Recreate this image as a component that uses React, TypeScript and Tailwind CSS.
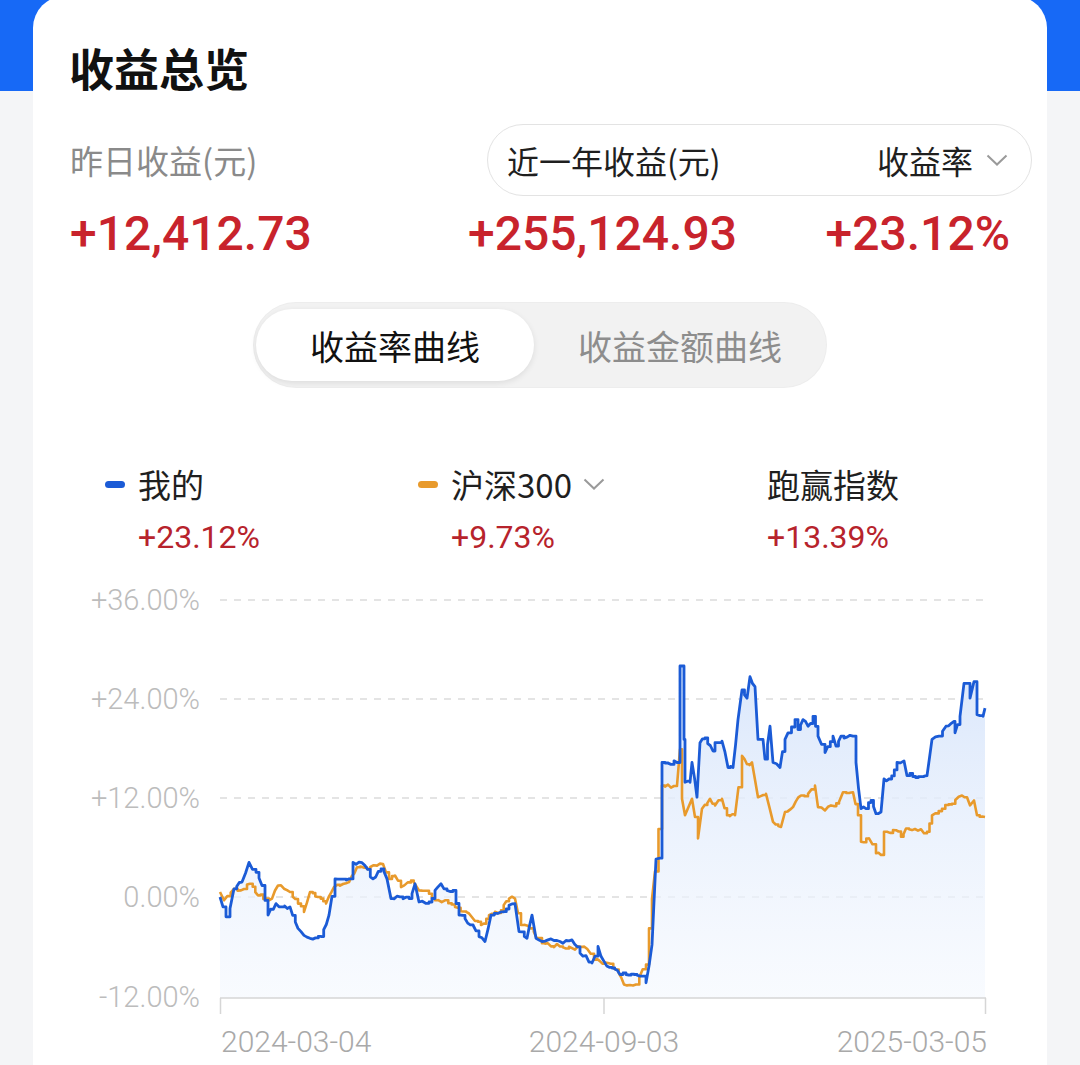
import React from 'react';

const CJK = "font-['Noto_Sans_CJK_SC','Noto_Sans',sans-serif]";
const NUM = "font-['Roboto','Noto_Sans',sans-serif]";

// keypoints: [x in page px, value in %]
const BLUE: [number, number][] = [
  [220, 0], [226, -2.4], [230, -1.4], [234, 1.0], [242, 1.8], [249, 4.2], [256, 3.0], [262, 1.4],
  [268, -2.2], [276, -0.8], [282, -1.2], [290, -1.2], [298, -3.8], [310, -5.0], [321, -4.8],
  [329, -2.2], [335, 2.2], [349, 2.2], [353, 4.2], [365, 3.8], [373, 2.2], [381, 3.4], [387, 2.2],
  [391, -0.2], [409, -0.2], [415, 1.6], [419, -0.6], [429, -0.6], [435, 0.8], [441, 1.6], [447, 0.8],
  [453, 0.8], [459, -2.2], [465, -2.6], [473, -3.4], [479, -4.8], [485, -5.4], [491, -2.2],
  [501, -1.8], [509, -1.0], [515, -0.8], [519, -4.2], [527, -5.0], [532, -2.2], [536, -5.0],
  [542, -5.4], [548, -5.2], [560, -5.4], [572, -5.2], [580, -6.8], [592, -8.0], [598, -6.0],
  [604, -7.8], [612, -8.6], [620, -9.4], [626, -9.4], [634, -9.4], [643, -9.6], [646, -10.4],
  [652, -5.8], [656, 4.6], [660, 4.7], [662, 16.3], [677, 16.3], [680, 28.0], [684, 19.1],
  [685, 13.9], [690, 13.9], [692, 16.3], [697, 12.1], [700, 18.7], [705, 19.3], [713, 17.7],
  [715, 18.7], [722, 18.9], [728, 15.7], [733, 15.7], [738, 21.5], [742, 25.1], [747, 24.1],
  [750, 26.7], [755, 25.5], [758, 19.1], [763, 19.1], [765, 16.7], [770, 20.7], [773, 16.3],
  [780, 15.7], [785, 19.1], [788, 19.9], [795, 21.5], [798, 20.3], [803, 21.5], [808, 20.7],
  [813, 21.9], [818, 19.5], [825, 17.5], [833, 19.5], [836, 18.3], [841, 19.5], [853, 19.5],
  [856, 16.3], [861, 10.7], [866, 10.7], [871, 11.7], [876, 10.1], [881, 10.3], [884, 14.3],
  [889, 14.3], [897, 16.3], [904, 16.5], [907, 14.7], [927, 14.7], [932, 19.1], [939, 19.5],
  [946, 20.7], [954, 21.3], [955, 19.9], [960, 21.9], [964, 25.9], [967, 25.9], [970, 24.1],
  [974, 26.1], [977, 22.1], [983, 21.9], [985, 22.9],
];

const ORANGE: [number, number][] = [
  [220, 0.6], [224, -0.4], [234, 1.0], [241, 0.8], [250, 1.6], [258, 0.2], [266, -0.2], [272, -0.2],
  [278, 1.4], [290, 0.6], [298, -0.8], [304, -1.8], [310, 0.6], [318, 0], [326, -0.8], [334, 1.2],
  [349, 1.8], [357, 3.6], [367, 3.4], [377, 3.8], [383, 4.0], [389, 2.2], [395, 2.6], [401, 1.2],
  [411, 2.0], [419, 0.8], [429, 0.4], [435, -0.4], [445, -0.4], [455, -1.2], [469, -2.0],
  [481, -3.4], [489, -2.2], [501, -1.6], [509, -0.2], [515, -0.2], [521, -3.4], [531, -3.8],
  [542, -5.6], [560, -6.0], [572, -6.2], [584, -6.0], [594, -7.6], [608, -8.0], [616, -8.8],
  [624, -10.6], [636, -10.6], [646, -8.2], [649, -3.8], [655, 3.1], [662, 13.5], [677, 13.5],
  [680, 17.9], [682, 11.9], [685, 9.9], [692, 11.9], [698, 7.1], [702, 10.7], [710, 11.9],
  [715, 11.1], [722, 11.9], [727, 9.9], [735, 9.9], [742, 17.1], [747, 16.1], [752, 16.3],
  [758, 12.1], [766, 12.5], [773, 9.1], [781, 8.5], [785, 10.3], [793, 10.9], [801, 12.3],
  [808, 12.5], [815, 13.5], [818, 10.9], [825, 10.5], [831, 11.1], [839, 11.5], [843, 12.7],
  [853, 12.7], [858, 9.9], [861, 6.7], [869, 7.1], [876, 5.3], [881, 5.1], [884, 7.9], [896, 8.1],
  [901, 7.3], [906, 8.3], [927, 7.9], [932, 9.9], [942, 10.7], [952, 11.3], [962, 12.3],
  [967, 12.1], [970, 11.1], [974, 11.7], [977, 9.9], [985, 9.7],
];

const vy = (v: number) => 897 - v * 8.25;

// fills the gaps between keypoints with small stair steps so the line looks like daily data
function densify(keys: [number, number][], seed: number, amp: number) {
  let s = seed;
  const rand = () => {
    s = (s * 9301 + 49297) % 233280;
    return s / 233280;
  };
  const out: [number, number][] = [keys[0]];
  for (let i = 1; i < keys.length; i++) {
    const [x0, v0] = keys[i - 1];
    const [x1, v1] = keys[i];
    const steps = Math.max(1, Math.round((x1 - x0) / 3));
    for (let k = 1; k <= steps; k++) {
      const t = k / steps;
      const noise = k < steps ? (rand() - 0.5) * amp : 0;
      const px = x0 + (x1 - x0) * t;
      const pv = v0 + (v1 - v0) * t + noise;
      const prev = out[out.length - 1];
      if (rand() < 0.35) out.push([px, prev[1]]);
      out.push([px, pv]);
    }
  }
  return out;
}

const toPath = (pts: [number, number][]) =>
  pts.map((p, i) => `${i ? 'L' : 'M'}${p[0].toFixed(1)} ${vy(p[1]).toFixed(1)}`).join(' ');

function Chevron({ className }: { className?: string }) {
  return (
    <svg width="22" height="12" viewBox="0 0 22 12" className={className}>
      <polyline points="1.5,1.5 11,10.5 20.5,1.5" fill="none" stroke="#9a9a9a" strokeWidth="2" />
    </svg>
  );
}

function Chart() {
  const blue = toPath(densify(BLUE, 7, 0.6));
  const orange = toPath(densify(ORANGE, 13, 0.5));
  const area = `${blue} L985 998 L220 998 Z`;
  const grid = [
    { label: '+36.00%', y: 600 },
    { label: '+24.00%', y: 699 },
    { label: '+12.00%', y: 798 },
    { label: '0.00%', y: 897 },
  ];

  return (
    <svg width={1014} height={485} viewBox="33 580 1014 485" className="block">
      <defs>
        <linearGradient id="areaFill" gradientUnits="userSpaceOnUse" x1="0" y1="670" x2="0" y2="998">
          <stop offset="0" stopColor="#d9e6fb" stopOpacity="0.95" />
          <stop offset="1" stopColor="#f4f8fe" stopOpacity="0.6" />
        </linearGradient>
      </defs>

      {grid.map((g) => (
        <g key={g.label}>
          <text
            x={200}
            y={g.y}
            textAnchor="end"
            dominantBaseline="central"
            fontFamily="Roboto, sans-serif"
            fontWeight={300}
            fontSize={29}
            fill="#bcbcbc"
          >
            {g.label}
          </text>
          <line x1={220} x2={985} y1={g.y} y2={g.y} stroke="#dcdcdc" strokeWidth={1.5} strokeDasharray="7 7" />
        </g>
      ))}
      <text
        x={200}
        y={997}
        textAnchor="end"
        dominantBaseline="central"
        fontFamily="Roboto, sans-serif"
        fontWeight={300}
        fontSize={29}
        fill="#bcbcbc"
      >
        -12.00%
      </text>

      <path d={area} fill="url(#areaFill)" />
      <path d={orange} fill="none" stroke="#e89a2c" strokeWidth={2.6} strokeLinejoin="round" />
      <path d={blue} fill="none" stroke="#1b5bd6" strokeWidth={2.8} strokeLinejoin="round" />

      <line x1={220} x2={986} y1={998} y2={998} stroke="#d6d6d6" strokeWidth={1.5} />
      {[220.5, 604, 985.5].map((x) => (
        <line key={x} x1={x} x2={x} y1={998} y2={1014} stroke="#d6d6d6" strokeWidth={1.5} />
      ))}

      <g fontFamily="Roboto, sans-serif" fontSize={30} fill="#a9a9a9" fontWeight={300}>
        <text x={221} y={1052} textAnchor="start">2024-03-04</text>
        <text x={604} y={1052} textAnchor="middle">2024-09-03</text>
        <text x={987} y={1052} textAnchor="end">2025-03-05</text>
      </g>
    </svg>
  );
}

function LegendItem({
  dot,
  name,
  value,
  chevron,
  width,
}: {
  dot?: string;
  name: string;
  value: string;
  chevron?: boolean;
  width: string;
}) {
  return (
    <div className={`flex flex-col ${width}`}>
      <div className="flex items-center h-[44px]">
        {dot && <span className={`w-[20px] h-[7px] rounded-full mr-[13px] ${dot}`} />}
        <span className={`${CJK} text-[33px] leading-[44px] text-[#1f1f1f]`}>{name}</span>
        {chevron && <Chevron className="ml-[11px]" />}
      </div>
      <div className={`mt-[11px] ${dot ? 'pl-[33px]' : ''} ${NUM} text-[32px] leading-[40px] text-[#b7232c]`}>
        {value}
      </div>
    </div>
  );
}

export default function App() {
  return (
    <div className="w-[1080px] h-[1065px] overflow-hidden bg-[linear-gradient(to_bottom,#1769f6_0px,#1769f6_91px,#f4f5f7_91px)]">
      <div className="ml-[33px] -mt-[4px] w-[1014px] h-[1100px] bg-white rounded-t-[32px]">
        <h1 className={`${CJK} pt-[43px] pl-[36px] text-[45px] leading-[57px] font-bold text-[#111]`}>收益总览</h1>

        <div className="mt-[28px] flex items-center pl-[37px] pr-[15px]">
          <span className={`${CJK} text-[33px] leading-[44px] text-[#8a8a8a]`}>昨日收益(元)</span>
          <div className="ml-auto w-[545px] h-[72px] rounded-full border border-[#e3e3e3] flex items-center justify-between pl-[19px] pr-[23px]">
            <span className={`${CJK} text-[32px] leading-[44px] text-[#1f1f1f]`}>近一年收益(元)</span>
            <span className="flex items-center">
              <span className={`${CJK} text-[32px] leading-[44px] text-[#1f1f1f]`}>收益率</span>
              <Chevron className="ml-[13px]" />
            </span>
          </div>
        </div>

        <div className={`mt-[10px] flex items-center pl-[37px] pr-[37px] ${NUM} text-[48px] leading-[56px] font-medium text-[#c8232c]`}>
          <span className="w-[398px]">+12,412.73</span>
          <span>+255,124.93</span>
          <span className="ml-auto">+23.12%</span>
        </div>

        <div className="mt-[41px] mx-auto w-[572px] h-[84px] rounded-full bg-[#f2f2f2] shadow-[0_0_0_1px_#ededed] flex items-center pl-[2px] py-[6px]">
          <div className={`w-[278px] h-[72px] rounded-full bg-white shadow-[0_2px_6px_rgba(0,0,0,0.09)] flex items-center justify-center ${CJK} text-[34px] text-[#111]`}>
            收益率曲线
          </div>
          <div className={`flex-1 flex items-center justify-center ${CJK} text-[34px] text-[#8d8d8d]`}>
            收益金额曲线
          </div>
        </div>

        <div className="mt-[75px] flex pl-[72px]">
          <LegendItem width="w-[313px]" dot="bg-[#1b5bd6]" name="我的" value="+23.12%" />
          <LegendItem width="w-[349px]" dot="bg-[#e89a2c]" name="沪深300" value="+9.73%" chevron />
          <LegendItem width="w-[240px]" name="跑赢指数" value="+13.39%" />
        </div>

        <div className="mt-[23px]">
          <Chart />
        </div>
      </div>
    </div>
  );
}
